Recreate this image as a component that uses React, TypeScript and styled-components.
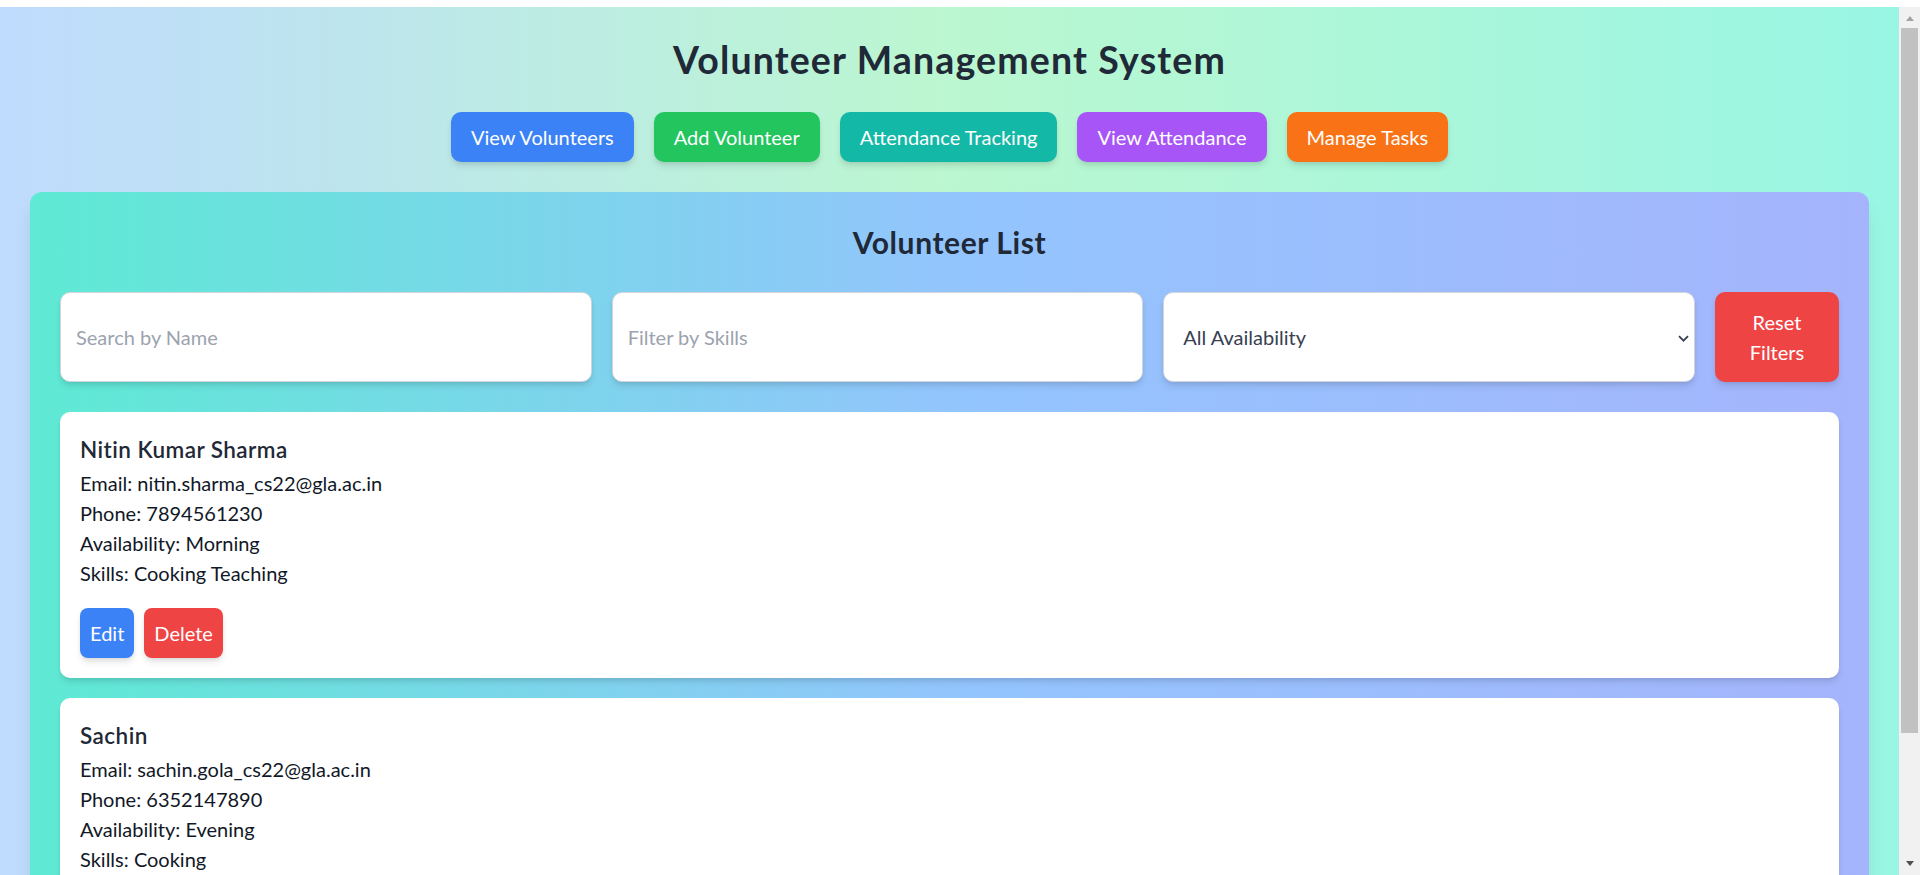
import React from "react";
import styled, { createGlobalStyle } from "styled-components";

const GlobalStyle = createGlobalStyle`
  html, body {
    margin: 0;
    padding: 0;
    height: 100%;
    overflow: hidden;
    background: #ffffff;
  }
  * { box-sizing: border-box; }
  body {
    font-family: Lato, "Open Sans", Arial, sans-serif;
    color: #111827;
  }
`;

const Frame = styled.div`
  display: flex;
  margin-top: 7px;
  height: calc(100vh - 7px);
`;

const Viewport = styled.div`
  flex: 1 1 auto;
  min-width: 0;
  overflow: hidden;
`;

const ScrollBar = styled.div`
  flex: none;
  width: 21px;
  display: flex;
  flex-direction: column;
  background: #f1f1f1;
`;

const ArrowBox = styled.div<{ $pad: string }>`
  flex: none;
  height: 21px;
  display: flex;
  justify-content: center;
  align-items: flex-start;
  padding-top: ${(p) => p.$pad};
`;

const ArrowUp = styled.span`
  width: 0;
  height: 0;
  border-left: 4.5px solid transparent;
  border-right: 4.5px solid transparent;
  border-bottom: 5px solid #a3a3a3;
`;

const ArrowDown = styled.span`
  width: 0;
  height: 0;
  border-left: 4.5px solid transparent;
  border-right: 4.5px solid transparent;
  border-top: 5px solid #505050;
`;

const Thumb = styled.div`
  flex: none;
  height: 705px;
  margin: 0 2px;
  background: #c1c1c1;
`;

const TrackRest = styled.div`
  flex: 1 1 auto;
`;

const Page = styled.div`
  min-height: 100%;
  padding: 30px;
  background: linear-gradient(to right, #bfdbfe, #bbf7d0, #99f6e4);
`;

const Title = styled.h1`
  margin: 0 0 30px;
  font-size: 37.5px;
  line-height: 45px;
  font-weight: 700;
  letter-spacing: 1.15px;
  text-align: center;
  color: #1f2937;
`;

const Nav = styled.nav`
  display: flex;
  justify-content: center;
  gap: 20px;
  margin-bottom: 30px;
`;

const NavButton = styled.button<{ $bg: string }>`
  border: none;
  border-radius: 10px;
  padding: 10px 20px;
  font-family: inherit;
  font-size: 20px;
  line-height: 30px;
  color: #ffffff;
  background: ${(p) => p.$bg};
  box-shadow: 0 5px 7.5px -1.25px rgba(0, 0, 0, 0.1),
    0 2.5px 5px -2.5px rgba(0, 0, 0, 0.1);
  cursor: pointer;
`;

const Panel = styled.section`
  border-radius: 12px;
  padding: 30px;
  background: linear-gradient(to right, #5eead4, #93c5fd, #a5b4fc);
  box-shadow: 0 12.5px 18.75px -3.75px rgba(0, 0, 0, 0.1),
    0 5px 7.5px -5px rgba(0, 0, 0, 0.1);
`;

const PanelTitle = styled.h2`
  margin: 0 0 30px;
  font-size: 30px;
  line-height: 40px;
  font-weight: 700;
  letter-spacing: 0.6px;
  text-align: center;
  color: #1f2937;
`;

const FilterRow = styled.div`
  display: grid;
  grid-template-columns: repeat(3, minmax(0, 1fr)) 124px;
  align-items: stretch;
  gap: 20px;
  margin-bottom: 30px;
`;

const fieldBase = `
  width: 100%;
  min-width: 0;
  border: 1px solid #d1d5db;
  border-radius: 10px;
  background: #ffffff;
  font-family: inherit;
  font-size: 20px;
  line-height: 30px;
  outline: none;
  box-shadow: 0 5px 7.5px -1.25px rgba(0, 0, 0, 0.1),
    0 2.5px 5px -2.5px rgba(0, 0, 0, 0.1);
`;

const TextInput = styled.input`
  ${fieldBase}
  padding: 15px;
  color: #1f2937;
  &::placeholder {
    color: #9ca3af;
  }
`;

const SelectWrap = styled.div`
  position: relative;
  min-width: 0;
  display: flex;
`;

const Select = styled.select`
  ${fieldBase}
  appearance: none;
  -webkit-appearance: none;
  padding: 15px 30px 15px 19px;
  color: #374151;
`;

const Chevron = styled.svg`
  position: absolute;
  right: 6.5px;
  top: 50%;
  margin-top: -2px;
  pointer-events: none;
`;

const ResetButton = styled.button`
  width: 124px;
  border: none;
  border-radius: 10px;
  padding: 15px;
  font-family: inherit;
  font-size: 20px;
  line-height: 30px;
  color: #ffffff;
  background: #ef4444;
  box-shadow: 0 5px 7.5px -1.25px rgba(0, 0, 0, 0.1),
    0 2.5px 5px -2.5px rgba(0, 0, 0, 0.1);
  cursor: pointer;
`;

const CardList = styled.div`
  display: flex;
  flex-direction: column;
  gap: 20px;
`;

const Card = styled.article`
  background: #ffffff;
  border-radius: 10px;
  padding: 20px;
  box-shadow: 0 5px 7.5px -1.25px rgba(0, 0, 0, 0.1),
    0 2.5px 5px -2.5px rgba(0, 0, 0, 0.1);
`;

const Name = styled.h3`
  margin: 0;
  font-size: 22.5px;
  line-height: 36px;
  font-weight: 600;
  letter-spacing: 0.45px;
  color: #1f2937;
`;

const Detail = styled.p`
  margin: 0;
  font-size: 20px;
  line-height: 30px;
  color: #111827;
`;

const Actions = styled.div`
  display: flex;
  gap: 10px;
  margin-top: 20px;
`;

const ActionButton = styled.button<{ $bg: string }>`
  border: none;
  border-radius: 8px;
  padding: 10px;
  font-family: inherit;
  font-size: 20px;
  line-height: 30px;
  color: #ffffff;
  background: ${(p) => p.$bg};
  box-shadow: 0 5px 7.5px -1.25px rgba(0, 0, 0, 0.1),
    0 2.5px 5px -2.5px rgba(0, 0, 0, 0.1);
  cursor: pointer;
`;

const navItems = [
  { label: "View Volunteers", bg: "#3b82f6" },
  { label: "Add Volunteer", bg: "#22c55e" },
  { label: "Attendance Tracking", bg: "#14b8a6" },
  { label: "View Attendance", bg: "#a855f7" },
  { label: "Manage Tasks", bg: "#f97316" },
];

const volunteers = [
  {
    name: "Nitin Kumar Sharma",
    email: "nitin.sharma_cs22@gla.ac.in",
    phone: "7894561230",
    availability: "Morning",
    skills: "Cooking Teaching",
  },
  {
    name: "Sachin",
    email: "sachin.gola_cs22@gla.ac.in",
    phone: "6352147890",
    availability: "Evening",
    skills: "Cooking",
  },
];

export default function App() {
  return (
    <>
      <GlobalStyle />
      <Frame>
        <Viewport>
          <Page>
            <Title>Volunteer Management System</Title>
            <Nav>
              {navItems.map((n) => (
                <NavButton key={n.label} $bg={n.bg}>
                  {n.label}
                </NavButton>
              ))}
            </Nav>
            <Panel>
              <PanelTitle>Volunteer List</PanelTitle>
              <FilterRow>
                <TextInput placeholder="Search by Name" />
                <TextInput placeholder="Filter by Skills" />
                <SelectWrap>
                  <Select defaultValue="">
                    <option value="">All Availability</option>
                    <option value="Morning">Morning</option>
                    <option value="Afternoon">Afternoon</option>
                    <option value="Evening">Evening</option>
                  </Select>
                  <Chevron width="11" height="7" viewBox="0 0 11 7">
                    <path
                      d="M1 1.2 L5.5 5.7 L10 1.2"
                      fill="none"
                      stroke="#374151"
                      strokeWidth="1.8"
                    />
                  </Chevron>
                </SelectWrap>
                <ResetButton>Reset Filters</ResetButton>
              </FilterRow>
              <CardList>
                {volunteers.map((v) => (
                  <Card key={v.email}>
                    <Name>{v.name}</Name>
                    <Detail>Email: {v.email}</Detail>
                    <Detail>Phone: {v.phone}</Detail>
                    <Detail>Availability: {v.availability}</Detail>
                    <Detail>Skills: {v.skills}</Detail>
                    <Actions>
                      <ActionButton $bg="#3b82f6">Edit</ActionButton>
                      <ActionButton $bg="#ef4444">Delete</ActionButton>
                    </Actions>
                  </Card>
                ))}
              </CardList>
            </Panel>
          </Page>
        </Viewport>
        <ScrollBar>
          <ArrowBox $pad="9px">
            <ArrowUp />
          </ArrowBox>
          <Thumb />
          <TrackRest />
          <ArrowBox $pad="7px">
            <ArrowDown />
          </ArrowBox>
        </ScrollBar>
      </Frame>
    </>
  );
}
